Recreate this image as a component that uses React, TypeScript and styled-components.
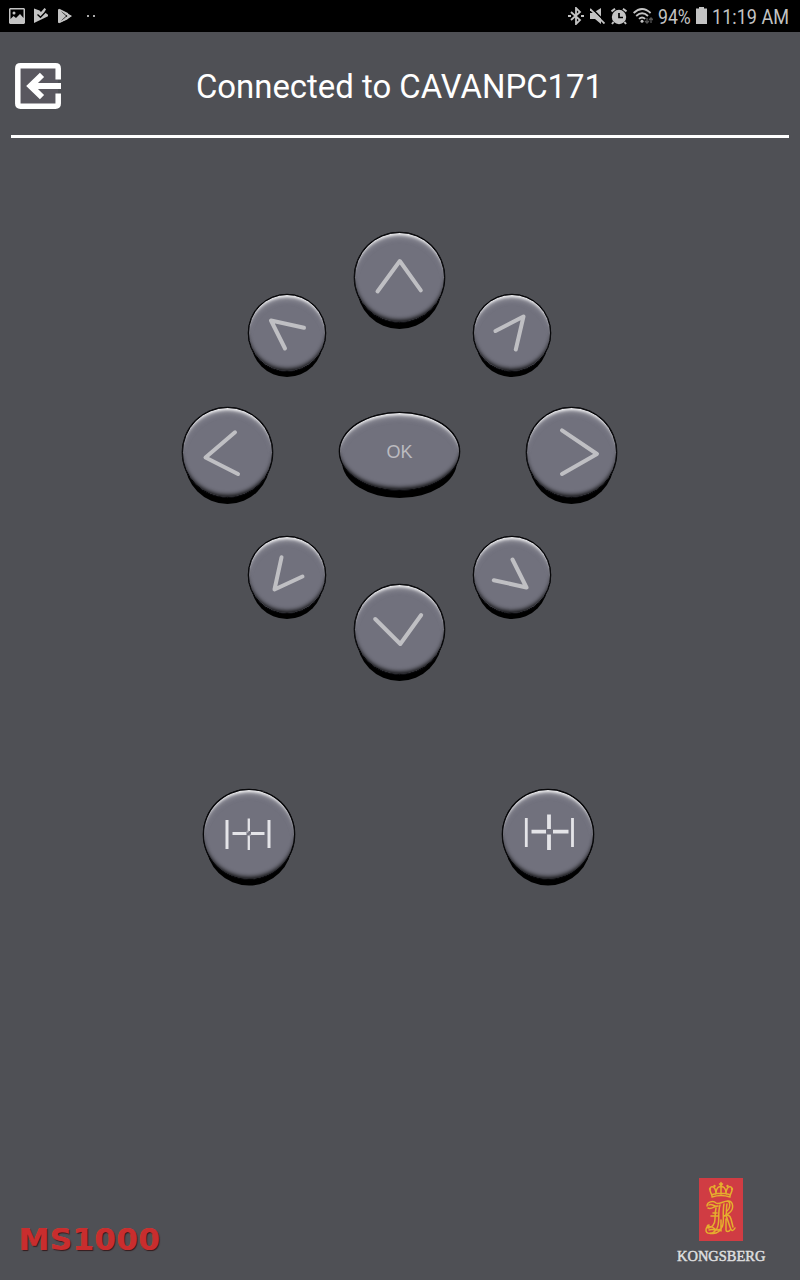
import React from "react";
import styled, { createGlobalStyle } from "styled-components";

const GlobalStyle = createGlobalStyle`
  *, *::before, *::after { box-sizing: border-box; }
  body { margin: 0; background: #4f5055; }
`;

const Screen = styled.div`
  width: 800px;
  height: 1280px;
  display: flex;
  flex-direction: column;
  overflow: hidden;
  background: #4f5055;
  font-family: Roboto, "Liberation Sans", sans-serif;
`;

const StatusBar = styled.div`
  height: 32px;
  flex: none;
  padding: 0 11px 0 9px;
  display: flex;
  justify-content: space-between;
  background: #000;
  color: #c3c3c3;
`;

const StatusGroup = styled.div`
  display: flex;
  align-items: center;
`;

const StatusIcon = styled.svg<{ $gap?: number }>`
  flex: none;
  display: block;
  margin-right: ${(p) => p.$gap ?? 0}px;
`;

const StatusText = styled.span<{ $width: number; $squeeze: number; $gap?: number }>`
  width: ${(p) => p.$width}px;
  margin-right: ${(p) => p.$gap ?? 0}px;
  font-size: 20.5px;
  line-height: 32px;
  padding-top: 2px;
  white-space: nowrap;
  transform: scaleX(${(p) => p.$squeeze});
  transform-origin: left center;
`;

const Header = styled.header`
  height: 106px;
  flex: none;
  margin: 0 11px;
  padding: 2px 0 0 3px;
  display: grid;
  grid-template-columns: 48px 1fr 52px;
  align-items: center;
  border-bottom: 3px solid #fff;
`;

const BackButton = styled.button`
  width: 48px;
  height: 48px;
  margin-top: 2px;
  padding: 0;
  border: 0;
  background: transparent;
`;

const Title = styled.h1`
  margin: 0;
  padding-top: 5px;
  color: #fff;
  font-size: 32.9px;
  font-weight: 400;
  line-height: 40px;
  text-align: center;
  white-space: nowrap;
`;

const Controls = styled.main`
  flex: 1;
  padding-top: 94px;
  display: flex;
  flex-direction: column;
  align-items: center;
`;

const PadRow = styled.div<{ $width: number; $height: number; $top?: number; $shift?: number }>`
  width: ${(p) => p.$width}px;
  height: ${(p) => p.$height}px;
  flex: none;
  margin-top: ${(p) => p.$top ?? 0}px;
  margin-right: ${(p) => p.$shift ?? 1}px;
  display: flex;
  justify-content: space-between;
  align-items: flex-start;
`;

const RoundButton = styled.button<{ $w: number; $h: number; $top?: number; $drop?: number }>`
  width: ${(p) => p.$w}px;
  height: ${(p) => p.$h}px;
  flex: none;
  margin: ${(p) => p.$top ?? 0}px 0 0;
  padding: 0;
  display: flex;
  align-items: center;
  justify-content: center;
  border: 1px solid #050507;
  border-radius: 50%;
  background: #71717d;
  color: #bbbbc0;
  font: 18px "Liberation Sans", Arial, sans-serif;
  box-shadow:
    inset 0 4px 3px -2px rgba(255, 255, 255, 0.85),
    inset 0 7px 6px -4px rgba(225, 225, 230, 0.5),
    inset 0 -4px 4px -2px rgba(0, 0, 0, 0.9),
    0 0 0 0.3px #050507,
    0 ${(p) => p.$drop ?? 9}px 0 -3px #000;
`;

const OkLabel = styled.span`
  padding-top: 1px;
`;

const Glyph = styled.svg`
  width: 100%;
  height: 100%;
  flex: none;
  overflow: visible;
  fill: none;
  stroke: #bfbfc3;
  stroke-width: 4;
  stroke-linecap: round;
  stroke-linejoin: round;
`;

const Footer = styled.footer`
  height: 110px;
  flex: none;
  padding: 0 34px 15px 19px;
  display: flex;
  justify-content: space-between;
  align-items: flex-end;
`;

const Product = styled.div`
  margin-bottom: 6px;
  font: bold 30.6px/38px "DejaVu Sans", sans-serif;
  letter-spacing: 0.7px;
  color: #c92d2e;
  text-shadow: 1px 1px 1px #351a1d, -0.5px -0.5px 0 #d9594f;
`;

const Brand = styled.div`
  width: 89px;
  display: flex;
  flex-direction: column;
  align-items: center;
`;

const BrandName = styled.div`
  width: 89px;
  margin-top: 6px;
  color: #dededf;
  font: 15px/18px "Liberation Serif", serif;
  -webkit-text-stroke: 0.5px #dededf;
  white-space: nowrap;
  transform: scaleX(0.965);
  transform-origin: left center;
`;

type ArrowProps = { label: string; size: number; points: string; top?: number };

const Arrow = ({ label, size, points, top }: ArrowProps) => (
  <RoundButton aria-label={label} $w={size} $h={size} $top={top} $drop={size > 80 ? 9 : 8}>
    <Glyph viewBox={`1 1 ${size - 2} ${size - 2}`}>
      <polyline points={points} />
    </Glyph>
  </RoundButton>
);

const CrestDrawing = styled.svg`
  display: block;
  margin-right: 2px;
`;

const Crest = () => (
  <CrestDrawing width="44" height="63" viewBox="0 0 44 63">
    <rect width="44" height="63" fill="#d03c43" />
    <g fill="none" stroke="#e5ae2e" strokeWidth="1.5" strokeLinecap="round" strokeLinejoin="round">
      <path d="M13 19q9-3 18 0M13.500 16.500q8.500-2.500 17 0M13 18c-1-4-4-7-1-9 3-1 5 2 5 7M31 18c1-4 4-7 1-9-3-1-5 2-5 7M17 15c0-5 3-7 5-6 2-1 5 1 5 6M22 9v7M22 4.500v4M20.500 6h3" />
      <path d="M8 28c0-4 6-6 9-3 3 2 7-2 12-2 6 0 6 9 1 12l-4 3M9 30c4 2 7-3 10-2M10 27c3-2 5 2 9 1M17 30c-2 9 1 15-5 19-4 3-5-2-2-2M21 27c-3 9 1 19-4 25-4 5-10 4-10 0 0-5 6-4 9-1M25 26c-2 10 1 18-2 23-3 7-8 7-12 6M28 26c-1 4 0 8-1 11l4 12c1 4 3 5 5 1M25 38c3-2 6-1 7 3l2 8M12 38h7M14 35h4M29 23c3 2 2 8-1 10M10 52c5-2 7 2 12-1M22 42v11M27 41v11c0 2 3 2 4 0" />
    </g>
    <g fill="#e5ae2e">
      <circle cx="11" cy="11" r="1.200" /><circle cx="15.500" cy="8" r="1.200" />
      <circle cx="22" cy="6.500" r="1.500" /><circle cx="28.500" cy="8" r="1.200" />
      <circle cx="33" cy="11" r="1.200" />
    </g>
  </CrestDrawing>
);

export default function App() {
  return (
    <>
      <GlobalStyle />
      <Screen>
        <StatusBar>
          <StatusGroup>
            <StatusIcon $gap={9} width="16" height="16" viewBox="0 0 16 16">
              <path fill="#c3c3c3" fillRule="evenodd" d="M1 0h14l1 1v14l-1 1H1l-1-1V1zM1.500 1.500v9.500l3-3 2.500 2 4-4 3.500 4V1.500zM5 3.500a1.500 1.500 0 110 3 1.500 1.500 0 010-3" />
            </StatusIcon>
            <StatusIcon $gap={10} width="14" height="16" viewBox="0 0 14 16">
              <path fill="#c3c3c3" d="M0 .5l5.500 2L7 4l3.500-4L12 1.200 10.500 4l3.500 2.800v1.500L0 15z" />
              <path fill="none" stroke="#000" strokeWidth="1.300" d="M3.500 6.500l3 2.800L12 3.500" />
            </StatusIcon>
            <StatusIcon $gap={14} width="15" height="16" viewBox="0 0 15 16">
              <path fill="#c3c3c3" d="M0 1l8 4 6 3-6 4-8 3z" />
              <path fill="none" stroke="#000" strokeWidth=".8" d="M1 1l7.500 7L1 15" />
              <path fill="none" stroke="#c3c3c3" strokeWidth="1.600" d="M1 1.500l9 4.500M1 14.500l9-4.500M8 5.500l4 2.500-4 2.500" />
              <path fill="#000" d="M8 7l1.500 1L8 9z" />
            </StatusIcon>
            <StatusIcon width="9" height="2" viewBox="0 0 9 2">
              <path fill="#aaa" d="M0 0h2v2H0zM6 0h2v2H6z" />
            </StatusIcon>
          </StatusGroup>
          <StatusGroup>
            <StatusIcon $gap={6} width="16" height="18" viewBox="0 0 16 18">
              <path fill="none" stroke="#c3c3c3" strokeWidth="1.800" d="M3 5l9 8-4 4V1l4 4-9 8" />
              <path fill="#c3c3c3" d="M0 8h3v2H0zM13 8h3v2h-3z" />
            </StatusIcon>
            <StatusIcon $gap={6} width="15" height="16" viewBox="0 0 15 16">
              <path fill="#c3c3c3" d="M0 5h3l8-5v16l-6-5H0z" />
              <path stroke="#000" strokeWidth="1.500" d="M1.500 0l14 14" />
              <path stroke="#c3c3c3" strokeWidth="1.800" d="M0 1l14.500 14.500" />
            </StatusIcon>
            <StatusIcon $gap={6} width="16" height="17" viewBox="0 0 16 17">
              <circle cx="8" cy="9" r="7.200" fill="#c3c3c3" />
              <path fill="none" stroke="#000" strokeWidth="1.700" d="M8 5v4.500h4" />
              <path fill="none" stroke="#c3c3c3" strokeWidth="2" d="M.5 3.500L4 .8M15.500 3.500L12 .8M2.500 14l-1.500 2M13.500 14l1.500 2" />
            </StatusIcon>
            <StatusIcon $gap={5} width="20" height="17" viewBox="0 0 20 17">
              <path fill="none" stroke="#c3c3c3" strokeWidth="1.800" d="M.6 5q8.400-8 17 0M3.200 8q5.900-5.500 11.800 0M6 10.900q3-2.800 6.200 0" />
              <circle cx="9" cy="13.300" r="1.500" fill="#c3c3c3" />
              <path fill="none" stroke="#555" strokeWidth="1.300" d="M14 10v5M12 13l2 2 2-2M18 15v-5M16 12l2-2 2 2" />
            </StatusIcon>
            <StatusText $width={32} $squeeze={0.86} $gap={6}>94%</StatusText>
            <StatusIcon $gap={5} width="11" height="19" viewBox="0 0 11 19">
              <path fill="#c3c3c3" d="M3 0h5v1.500h3V17H0V1.500h3z" />
            </StatusIcon>
            <StatusText $width={77} $squeeze={0.88}>11:19 AM</StatusText>
          </StatusGroup>
        </StatusBar>
        <Header>
          <BackButton aria-label="Disconnect">
            <svg width="48" height="48" viewBox="0 0 48 48">
              <path fill="#59575f" d="M4 4h40v40H4z" />
              <path fill="none" stroke="#fff" strokeWidth="5.500" d="M44.200 17.500V6.500q0-2.700-2.700-2.700h-35q-2.700 0-2.700 2.700v35q0 2.700 2.700 2.700h35q2.700 0 2.700-2.700V31.500" />
              <path fill="none" stroke="#fff" strokeWidth="6" d="M47 24H17M28 12.800L16.500 24 28 35.200" />
            </svg>
          </BackButton>
          <Title>Connected to CAVANPC171</Title>
        </Header>
        <Controls>
          <PadRow $width={303} $height={175} $shift={1}>
            <Arrow label="Up left" size={78} top={62} points="56,33.700 23,26.500 37,54.500" />
            <Arrow label="Up" size={91} points="23.500,59.500 45.800,29 66.800,58.300" />
            <Arrow label="Up right" size={78} top={62} points="22.500,37 50.500,22.500 42.800,55.500" />
          </PadRow>
          <PadRow $width={435} $height={129} $shift={1}>
            <Arrow label="Left" size={91} points="53,25.300 23.500,50.500 56,67" />
            <RoundButton $w={121} $h={79} $top={5} $drop={10}>
              <OkLabel>OK</OkLabel>
            </RoundButton>
            <Arrow label="Right" size={91} points="36,23.300 71,47 36,67" />
          </PadRow>
          <PadRow $width={303} $height={144} $shift={1}>
            <Arrow label="Down left" size={78} points="33.500,21.300 26.500,53.500 54.500,40.500" />
            <Arrow label="Down" size={91} top={48} points="21.200,35 46.300,60 67.200,31" />
            <Arrow label="Down right" size={78} points="39.500,23.500 53.500,51.500 20.800,44.200" />
          </PadRow>
          <PadRow $width={391} $height={100} $top={109} $shift={3}>
            <RoundButton aria-label="Narrow" $w={92} $h={91} $drop={8.5}>
              <Glyph viewBox="1 1 90 89">
                <g stroke="#e4e4e8" strokeLinecap="butt">
                  <path strokeWidth="3" d="M24 31v29M66 31v28M29.500 44.500h14M48 44.500h13.500" />
                  <path strokeWidth="2.300" d="M45.800 29.500v12.500M45.800 46.500v14.500" />
                  <path strokeWidth="1.500" stroke="#a9a9b2" d="M43.500 43.500l2.300-1.500M45.800 47l2.200-1.500" />
                </g>
              </Glyph>
            </RoundButton>
            <RoundButton aria-label="Widen" $w={92} $h={91} $drop={8.5}>
              <Glyph viewBox="1 1 90 89">
                <g stroke="#e4e4e8" strokeLinecap="butt">
                  <path strokeWidth="2.800" d="M24.300 29v29M70.500 29v29" />
                  <path strokeWidth="3.800" d="M29.500 42.700h14.500M51 42.700h15.500M47 25.500v14.500M47 45.500v15.500" />
                </g>
              </Glyph>
            </RoundButton>
          </PadRow>
        </Controls>
        <Footer>
          <Product>MS1000</Product>
          <Brand>
            <Crest />
            <BrandName>KONGSBERG</BrandName>
          </Brand>
        </Footer>
      </Screen>
    </>
  );
}
